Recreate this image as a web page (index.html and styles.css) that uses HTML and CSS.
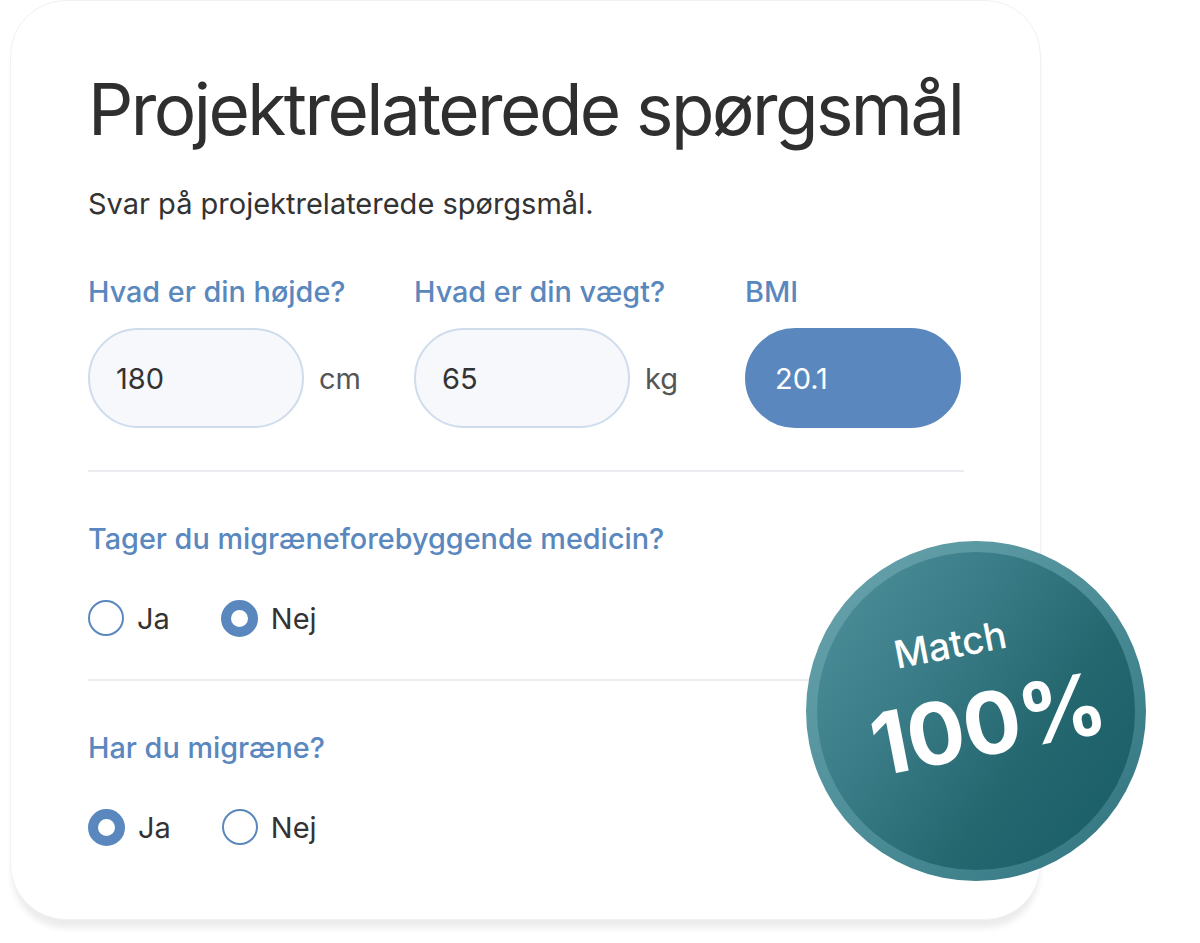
FILE: index.html
```html
<!DOCTYPE html>
<html lang="da">
<head>
<meta charset="utf-8">
<title>Projektrelaterede spørgsmål</title>
<link rel="stylesheet" href="styles.css">
</head>
<body>
<div class="stage">
  <section class="card">
    <h1 class="title">Projektrelaterede spørgsmål</h1>
    <p class="subtitle">Svar på projektrelaterede spørgsmål.</p>

    <div class="measures">
      <div class="field">
        <label class="label">Hvad er din højde?</label>
        <div class="input-row">
          <div class="input">180</div>
          <span class="unit">cm</span>
        </div>
      </div>
      <div class="field">
        <label class="label">Hvad er din vægt?</label>
        <div class="input-row">
          <div class="input">65</div>
          <span class="unit">kg</span>
        </div>
      </div>
      <div class="field">
        <label class="label">BMI</label>
        <div class="input-row">
          <div class="input input-filled">20.1</div>
        </div>
      </div>
    </div>

    <hr class="divider">

    <div class="question">
      <div class="label">Tager du migræneforebyggende medicin?</div>
      <div class="options">
        <span class="option"><span class="radio"></span>Ja</span>
        <span class="option"><span class="radio checked"></span>Nej</span>
      </div>
    </div>

    <hr class="divider">

    <div class="question">
      <div class="label">Har du migræne?</div>
      <div class="options">
        <span class="option"><span class="radio checked"></span>Ja</span>
        <span class="option"><span class="radio"></span>Nej</span>
      </div>
    </div>
  </section>

  <div class="badge">
    <div class="badge-inner">
      <div class="badge-text">
        <span class="badge-small">Match</span>
        <span class="badge-big">100%</span>
      </div>
    </div>
  </div>
</div>
</body>
</html>
```

FILE: styles.css
```css
* { box-sizing: border-box; }

html, body {
  margin: 0;
  padding: 0;
  background: #ffffff;
}

body {
  font-family: Inter, "Noto Sans", "Liberation Sans", sans-serif;
  color: #333333;
  width: 1200px;
  height: 943px;
  overflow: hidden;
}

.stage {
  position: relative;
  width: 1200px;
  height: 943px;
}

.card {
  margin-left: 10px;
  width: 1031px;
  height: 920px;
  background: #ffffff;
  border: 1px solid #f1f1f3;
  border-radius: 56px;
  box-shadow: 0 10px 6px -2px #ececec;
  padding: 65px 0 0 77px;
}

.title {
  margin: 0;
  font-size: 71px;
  font-weight: 400;
  letter-spacing: -2.55px;
  line-height: 86px;
  color: #2f2f2f;
  white-space: nowrap;
}

.subtitle {
  margin: 34px 0 0;
  font-size: 29px;
  line-height: 36px;
  color: #333333;
}

.measures {
  display: grid;
  grid-template-columns: 326px 331px 216px;
  margin-top: 52px;
}

.field {
  display: flex;
  flex-direction: column;
}

.label {
  font-size: 28.8px;
  font-weight: 500;
  line-height: 36px;
  color: #5a88be;
  white-space: nowrap;
}

.input-row {
  display: flex;
  align-items: center;
  margin-top: 18px;
  white-space: nowrap;
}

.input {
  flex: 0 0 auto;
  width: 216px;
  height: 100px;
  border-radius: 50px;
  background: #f6f8fc;
  border: 2px solid #cfdcec;
  padding-left: 26px;
  display: flex;
  align-items: center;
  font-size: 29px;
  color: #333333;
}

.input-filled {
  background: #5a88be;
  border-color: #5a88be;
  color: #ffffff;
  padding-left: 28px;
}

.unit {
  margin-left: 15px;
  font-size: 29px;
  color: #555555;
}

.divider {
  border: none;
  height: 2px;
  background: #ececf0;
  width: 876px;
  margin: 42px 0 0;
}

.question {
  padding-top: 49px;
}

.options {
  display: flex;
  gap: 51px;
  margin-top: 41px;
  height: 40px;
  align-items: center;
}

.option {
  display: inline-flex;
  align-items: center;
  gap: 13px;
  font-size: 29px;
  color: #333333;
}

.radio {
  display: inline-block;
  width: 36px;
  height: 36px;
  border-radius: 50%;
  border: 2px solid #5a88be;
  background: #ffffff;
}

.radio.checked {
  width: 37px;
  height: 37px;
  border: 10px solid #5a88be;
}

.question + .divider {
  margin-top: 41px;
}

.badge {
  position: absolute;
  left: 806px;
  top: 541px;
  width: 340px;
  height: 340px;
  border-radius: 50%;
  background: linear-gradient(135deg, #6aa5ae 0%, #4d8e98 50%, #2f737e 100%);
  padding: 11px;
}

.badge-inner {
  width: 100%;
  height: 100%;
  border-radius: 50%;
  background: linear-gradient(125deg, #4f929c 0%, #3a7d88 35%, #24676f 65%, #185c67 100%);
  display: flex;
  align-items: center;
  justify-content: center;
}

.badge-text {
  display: flex;
  flex-direction: column;
  align-items: center;
  transform: rotate(-11deg);
  color: #ffffff;
  margin-top: -34px;
  margin-left: 12px;
}

.badge-small {
  font-size: 38px;
  font-weight: 500;
  line-height: 42px;
  margin-left: -44px;
  margin-bottom: 18px;
}

.badge-big {
  font-size: 86px;
  font-weight: 700;
  line-height: 92px;
  letter-spacing: -1px;
}
```
